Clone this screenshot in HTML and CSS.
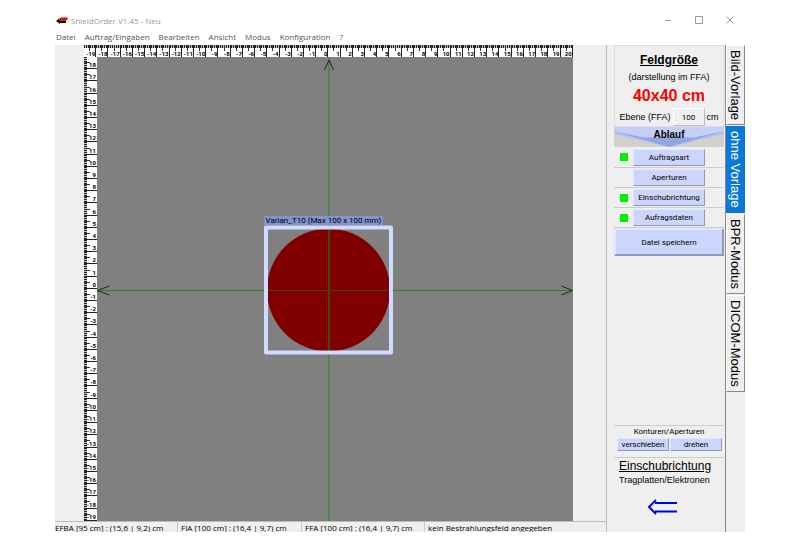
FILE: index.html
```html
<!DOCTYPE html>
<html lang="de">
<head>
<meta charset="utf-8">
<title>ShieldOrder V1.45 - Neu</title>
<link rel="stylesheet" href="styles.css">
</head>
<body>
<div class="window">
  <header class="titlebar">
    <svg class="app-icon" viewBox="0 0 12 9" aria-hidden="true">
      <path d="M0 5 3 2.500V3.500H10V7H4V8Z" fill="#111"/>
      <path d="M3 2.500 5 1.500H9.500V.5L12 2.500 10 5H4Z" fill="#d81818"/>
    </svg>
    <h1 class="title">ShieldOrder V1.45 - Neu</h1>
    <button class="win-button" aria-label="Minimieren"><svg viewBox="0 0 8 8"><path d="M1 4.500H7"/></svg></button>
    <button class="win-button" aria-label="Maximieren"><svg viewBox="0 0 8 8"><path d="M.5 .5H7.500V7.500H.5Z"/></svg></button>
    <button class="win-button" aria-label="Schließen"><svg viewBox="0 0 8 8"><path d="M.5 .5 7.500 7.500M7.500 .5 .5 7.500"/></svg></button>
  </header>
  <nav class="menubar">
    <a href="#">Datei</a>
    <a href="#">Auftrag/Eingaben</a>
    <a href="#">Bearbeiten</a>
    <a href="#">Ansicht</a>
    <a href="#">Modus</a>
    <a href="#">Konfiguration</a>
    <a href="#">?</a>
  </nav>
  <div class="content">
    <div class="left">
      <main class="workspace">
        <div class="ruler ruler-top" id="ruler-top"></div>
        <div class="ruler ruler-left" id="ruler-left"></div>
        <div class="canvas">
          <svg class="drawing" viewBox="0 0 477 464" preserveAspectRatio="xMidYMid slice">
            <circle cx="232" cy="233" r="61.500" fill="#800000"/>
            <g fill="none" stroke="#1f8a1f">
              <path d="M232.500 0V464M0 233.500H477"/>
            </g>
            <path d="M232.500 172V294M171 233.500H293" stroke="#3f4800" fill="none"/>
            <rect x="169.500" y="170.500" width="125" height="125" fill="none" stroke="#d0dcff" stroke-width="4" stroke-linejoin="round"/>
            <path d="M228 13 232.500 3 237 13M13 229 1 233.500 13 238M465 229 476 233.500 465 238" fill="none" stroke="#222"/>
          </svg>
          <span class="aperture-label">Varian_T10 (Max 100 x 100 mm)</span>
        </div>
      </main>
      <footer class="statusbar">
        <span>EFBA [95 cm] : (15,6 | 9,2) cm</span>
        <span>FIA [100 cm] : (16,4 | 9,7) cm</span>
        <span>FFA [100 cm] : (16,4 | 9,7) cm</span>
        <span>kein Bestrahlungsfeld angegeben</span>
      </footer>
    </div>
    <aside class="panel">
      <section class="field">
        <h2>Feldgröße</h2>
        <p class="note">(darstellung im FFA)</p>
        <p class="size">40x40 cm</p>
        <div class="plane">
          <label for="plane">Ebene (FFA)</label>
          <input id="plane" type="text" value="100">
          <span>cm</span>
        </div>
      </section>
      <section class="steps">
        <h2 class="flow">
          <svg viewBox="0 0 110 19" preserveAspectRatio="none" aria-hidden="true">
            <path d="M0 0H110V19H0Z" fill="#d2d0cb"/>
            <path d="M0 0H110V7L55 19 0 7Z" fill="#b4c1f2"/>
            <path d="M0 4 55 19 110 4 78 8H32Z" fill="#94a6e2"/>
            <path d="M0 0H110V4L80 10H30L0 4Z" fill="#c4cffa"/>
          </svg>
          <span>Ablauf</span>
        </h2>
        <div class="step"><i class="lamp"></i><button>Auftragsart</button></div>
        <div class="step"><i></i><button>Aperturen</button></div>
        <div class="step"><i class="lamp"></i><button>Einschubrichtung</button></div>
        <div class="step"><i class="lamp"></i><button>Aufragsdaten</button></div>
        <button class="save">Datei speichern</button>
      </section>
      <section class="contours">
        <h3>Konturen/Aperturen</h3>
        <div class="pair"><button>verschieben</button><button>drehen</button></div>
      </section>
      <section class="direction">
        <h2>Einschubrichtung</h2>
        <p>Tragplatten/Elektronen</p>
        <svg viewBox="0 0 32 16" aria-hidden="true"><path d="M8 4H30M8 12.500H30M9 1 2 8 9 15" fill="none" stroke="#0000e8" stroke-width="2"/></svg>
      </section>
    </aside>
    <nav class="tabs">
      <button>Bild-Vorlage</button>
      <button class="active">ohne Vorlage</button>
      <button>BPR-Modus</button>
      <button>DICOM-Modus</button>
    </nav>
  </div>
</div>
<script src="script.js"></script>
</body>
</html>
```
FILE: styles.css
```css
* { box-sizing: border-box; }

body {
  margin: 0;
  background: #fff;
  color: #000;
  font-family: "Liberation Sans", Arial, sans-serif;
  font-size: 8px;
}

h1, h2, h3, p { margin: 0; }

button {
  font: inherit;
  color: inherit;
  padding: 0;
}

.window {
  display: flex;
  flex-direction: column;
  height: 100vh;
  padding: 12px 55px 13px;
}

.titlebar {
  display: flex;
  align-items: center;
  height: 16px;
}

.app-icon {
  width: 12px;
  height: 9px;
  margin: 0 3px 0 1px;
}

.title {
  flex: 1;
  color: #999;
  font: 8px "Open Sans", sans-serif;
}

.win-button {
  display: grid;
  place-items: center;
  width: 31px;
  height: 16px;
  border: 0;
  background: none;
}

.win-button svg {
  width: 8px;
  height: 8px;
  fill: none;
  stroke: #999;
}

.menubar {
  display: flex;
  align-items: center;
  gap: 9px;
  height: 17px;
  padding-left: 1px;
  font: 8px "Open Sans", sans-serif;
}

.menubar a {
  color: #555;
  text-decoration: none;
}

.content {
  flex: 1;
  display: grid;
  grid-template-columns: 1fr 119px 19px;
  min-height: 0;
  background: #efefef;
}

.left {
  display: flex;
  flex-direction: column;
  min-width: 0;
  min-height: 0;
  border-right: 1px solid #bbb;
}

.workspace {
  flex: 1;
  display: grid;
  grid-template: 12px 1fr / 13px 1fr;
  min-height: 0;
  padding: 0 33px 0 29px;
}

.ruler {
  display: flex;
  background: #fff;
  font-family: Roboto, sans-serif;
  font-size: 6px;
  font-weight: bold;
  line-height: 6px;
}

.ruler span {
  flex: 1 1 0;
  display: flex;
  align-items: flex-end;
  justify-content: flex-end;
  min-width: 0;
  min-height: 0;
  white-space: nowrap;
}

.ruler-top { grid-column: 1 / 3; }

.ruler-top span {
  border-right: 1px solid #222;
  background:
    linear-gradient(#333, #333) 50% 0 / 1px 6px no-repeat,
    repeating-linear-gradient(to right, #222 0 1px, #bbb 1px 2px) 0 0 / 100% 3px no-repeat;
}

.ruler-left {
  flex-direction: column;
  overflow: hidden;
}

.ruler-left span {
  border-bottom: 1px solid #222;
  padding-right: 1px;
  background:
    linear-gradient(#333, #333) 0 50% / 6px 1px no-repeat,
    repeating-linear-gradient(to bottom, #222 0 1px, #bbb 1px 2px) 0 0 / 3px 100% no-repeat;
}

.canvas {
  position: relative;
  min-height: 0;
  background: #808080;
}

.drawing {
  display: block;
  width: 100%;
  height: 100%;
}

.aperture-label {
  position: absolute;
  left: 35%;
  top: 159px;
  padding: 0 2px;
  background: #8294cc;
  font-family: Roboto, sans-serif;
  font-size: 8px;
  line-height: 9px;
  white-space: nowrap;
}

.statusbar {
  display: grid;
  grid-template-columns: 122px 124px 123px 1fr;
  height: 11px;
  border-top: 1px solid #bbb;
  font: 8px/12px "Open Sans", sans-serif;
}

.statusbar span {
  overflow: hidden;
  white-space: nowrap;
}

.statusbar span + span {
  border-left: 1px solid #ccc;
  padding-left: 3px;
}

.panel {
  display: flex;
  flex-direction: column;
  min-height: 0;
  padding: 0 1px 0 7px;
  border-right: 1px solid #888;
}

.field {
  display: flex;
  flex-direction: column;
  align-items: center;
  height: 82px;
  padding-top: 7px;
  border: 1px solid #ddd;
}

.field h2 {
  font-size: 12px;
  line-height: 14px;
  text-decoration: underline;
}

.note {
  margin-top: 4px;
  font-size: 9px;
  line-height: 13px;
}

.size {
  color: #f00;
  font-size: 16px;
  font-weight: bold;
  line-height: 24px;
}

.plane {
  display: flex;
  align-items: center;
  gap: 2px;
  font-size: 9px;
}

.plane input {
  width: 32px;
  height: 18px;
  border: 1px solid #fff;
  border-right-color: #bbb;
  border-bottom-color: #bbb;
  background: #efefef;
  font: 8px Roboto, sans-serif;
  text-align: center;
}

.flow {
  display: grid;
  height: 20px;
  font-size: 10px;
}

.flow svg,
.flow span { grid-area: 1 / 1; }

.flow svg {
  width: 100%;
  height: 20px;
}

.flow span {
  text-align: center;
  line-height: 16px;
}

.step {
  display: grid;
  grid-template-columns: 8px 72px;
  column-gap: 5px;
  align-items: center;
  height: 20px;
  padding-left: 6px;
  border-bottom: 1px solid #ccc;
}

.step:first-of-type { height: 21px; }

.steps button,
.contours {
  font-family: Roboto, sans-serif;
}

.steps button,
.pair button {
  border: 1px solid #e0e6ff;
  border-right-color: #909ab8;
  border-bottom-color: #909ab8;
  background: #ccd6fc;
}

.step button { height: 17px; }

.lamp {
  height: 8px;
  background: #00f000;
}

.steps .save {
  width: 100%;
  height: 28px;
  border-width: 2px;
}

.contours {
  height: 33px;
  margin-top: auto;
  border-top: 1px solid #ccc;
  border-bottom: 1px solid #ccc;
}

.contours h3 {
  font-size: 8px;
  font-weight: normal;
  line-height: 12px;
  text-align: center;
}

.pair {
  display: grid;
  grid-template-columns: 1fr 1fr;
  gap: 1px;
  padding: 0 2px 0 3px;
}

.pair button { height: 13px; }

.direction {
  height: 74px;
  padding-left: 5px;
}

.direction h2 {
  font-size: 12px;
  font-weight: normal;
  line-height: 16px;
  text-decoration: underline;
}

.direction p {
  font-size: 9px;
  line-height: 12px;
}

.direction svg {
  display: block;
  width: 32px;
  height: 16px;
  margin: 13px 0 0 28px;
}

.tabs {
  display: flex;
  flex-direction: column;
  gap: 1px;
}

.tabs button {
  padding: 4px 0;
  border: 1px solid #fff;
  border-right-color: #888;
  border-bottom-color: #888;
  background: #efefef;
  font-size: 13px;
  line-height: 17px;
  writing-mode: vertical-rl;
  white-space: nowrap;
}

.tabs .active {
  border-color: #0a78d6;
  background: #0a78d6;
  color: #fff;
}
```
FILE: script.js
```js
function fillRuler(id, from, to) {
  const ruler = document.getElementById(id);
  const step = from < to ? 1 : -1;
  for (let value = from; value !== to + step; value += step) {
    const cell = document.createElement("span");
    cell.textContent = value;
    ruler.append(cell);
  }
}

fillRuler("ruler-top", -19, 20);
fillRuler("ruler-left", 18, -19);
```
